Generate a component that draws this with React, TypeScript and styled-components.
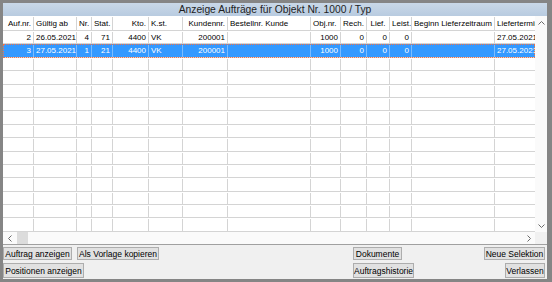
import React, { ReactElement } from "react";
import styled, { createGlobalStyle } from "styled-components";

type Align = "left" | "right" | "center";

interface Column {
    title: string;
    width: number;
    head: Align;
    body: Align;
}

const columns: Column[] = [
    { title: "Auf.nr.", width: 31, head: "right", body: "right" },
    { title: "Gültig ab", width: 43, head: "left", body: "left" },
    { title: "Nr.", width: 15, head: "left", body: "right" },
    { title: "Stat.", width: 21, head: "left", body: "right" },
    { title: "Kto.", width: 36, head: "right", body: "right" },
    { title: "K.st.", width: 34, head: "left", body: "left" },
    { title: "Kundennr.", width: 45, head: "right", body: "right" },
    { title: "Bestellnr. Kunde", width: 83, head: "left", body: "left" },
    { title: "Obj.nr.", width: 30, head: "left", body: "right" },
    { title: "Rech.", width: 26, head: "left", body: "right" },
    { title: "Lief.", width: 23, head: "center", body: "right" },
    { title: "Leist.", width: 22, head: "left", body: "right" },
    { title: "Beginn Lieferzeitraum", width: 83, head: "left", body: "left" },
    { title: "Liefertermin", width: 60, head: "left", body: "left" },
];

const orders: string[][] = [
    ["2", "26.05.2021", "4", "71", "4400", "VK", "200001", "", "1000", "0", "0", "0", "", "27.05.2021"],
    ["3", "27.05.2021", "1", "21", "4400", "VK", "200001", "", "1000", "0", "0", "0", "", "27.05.2021"],
];

const EMPTY_ROWS = 13;

const GlobalStyle = createGlobalStyle`
    body {
        margin: 0;
        background: #ffffff;
        font-family: "Liberation Sans", Arial, sans-serif;
    }
`;

const Frame = styled.div`
    box-sizing: border-box;
    width: 552px;
    height: 282px;
    padding: 3px 5px 3px 3px;
    background-color: #858585;
    display: flex;
    flex-direction: column;
`;

const TitleBar = styled.div`
    height: 13px;
    line-height: 13px;
    background: linear-gradient(#c9d8e8, #b8cbe0);
    color: #1e1e1e;
    font-size: 10.3px;
    text-align: center;
    white-space: nowrap;
`;

const Table = styled.div`
    display: grid;
    grid-template-columns: 532px 12px;
    grid-template-rows: 216px 12px;
    background-color: #ffffff;
`;

const Viewport = styled.div`
    overflow: hidden;
    font-size: 8px;
    color: #000000;
`;

const Line = styled.div<{ $selected?: boolean; $head?: boolean }>`
    display: grid;
    grid-template-columns: ${columns.map((c) => c.width + "px").join(" ")};
    box-sizing: border-box;
    height: ${(p) => (p.$head ? "15px" : "13.4px")};
    line-height: ${(p) => (p.$head ? "14px" : "12px")};
    padding-top: 1px;
    border-bottom: 1px solid #d4d4d4;
    background-color: ${(p) => (p.$selected ? "#3399ff" : "#ffffff")};
    color: ${(p) => (p.$selected ? "#ffffff" : "#000000")};
    outline: ${(p) => (p.$selected ? "1px dotted #f0734a" : "none")};
    outline-offset: -1px;
`;

const Cell = styled.div<{ $align: Align; $selected?: boolean }>`
    box-sizing: border-box;
    padding: 0 2px;
    border-right: 1px solid ${(p) => (p.$selected ? "rgba(255, 255, 255, 0.35)" : "#d4d4d4")};
    text-align: ${(p) => p.$align};
    white-space: nowrap;
    overflow: hidden;
`;

const VScroll = styled.div`
    display: flex;
    flex-direction: column;
    justify-content: space-between;
    background-color: #fafafa;
`;

const HScroll = styled.div`
    display: flex;
    align-items: stretch;
    background-color: #fafafa;
`;

const Arrow = styled.div<{ $size: number }>`
    flex: 0 0 ${(p) => p.$size}px;
    height: ${(p) => p.$size}px;
    display: flex;
    align-items: center;
    justify-content: center;
`;

const Thumb = styled.div`
    flex: 0 0 11px;
    margin: 0 1px;
    background-color: #dcdcdc;
`;

const Track = styled.div`
    flex: 1;
`;

const Corner = styled.div`
    background-color: #f0f0f0;
`;

const Panel = styled.div`
    flex: 1;
    display: flex;
    padding: 2px 2px 1px 0;
    border-top: 1px solid #a0a0a0;
    background-color: #f0f0f0;
`;

const Group = styled.div<{ $end?: boolean; $width?: number }>`
    display: grid;
    grid-template-rows: 13px 15px;
    row-gap: 3px;
    justify-items: ${(p) => (p.$end ? "end" : "start")};
    width: ${(p) => (p.$width ? p.$width + "px" : "auto")};
    margin-left: ${(p) => (p.$end ? "auto" : "0")};
`;

const ButtonRow = styled.div`
    display: flex;
    gap: 5px;
`;

const Button = styled.button<{ $w: number }>`
    box-sizing: border-box;
    width: ${(p) => p.$w}px;
    height: 100%;
    margin: 0;
    padding: 0;
    border: 1px solid #adadad;
    background-color: #e1e1e1;
    color: #000000;
    font-family: "Liberation Sans", Arial, sans-serif;
    font-size: 8.5px;
    white-space: nowrap;
    overflow: visible;
`;

function Chevron(props: { dir: "up" | "down" | "left" | "right" }): ReactElement {
    const points = {
        up: "0.5,3.5 3.5,0.5 6.5,3.5",
        down: "0.5,0.5 3.5,3.5 6.5,0.5",
        left: "3.5,0.5 0.5,3.5 3.5,6.5",
        right: "0.5,0.5 3.5,3.5 0.5,6.5",
    }[props.dir];
    const flat = props.dir === "up" || props.dir === "down";
    return (
        <svg width={flat ? 7 : 4} height={flat ? 4 : 7} viewBox={flat ? "0 0 7 4" : "0 0 4 7"}>
            <polyline points={points} fill="none" stroke="#6b6b6b" strokeWidth="1" />
        </svg>
    );
}

function OrderRow(props: { values: string[]; selected?: boolean }): ReactElement {
    return (
        <Line $selected={props.selected}>
            {columns.map((col, index) => (
                <Cell key={index} $align={col.body} $selected={props.selected}>
                    {props.values[index]}
                </Cell>
            ))}
        </Line>
    );
}

export default function App(): ReactElement {
    return (
        <>
            <GlobalStyle />
            <Frame>
                <TitleBar>Anzeige Aufträge für Objekt Nr. 1000 / Typ</TitleBar>
                <Table>
                    <Viewport>
                        <Line $head>
                            {columns.map((col, index) => (
                                <Cell key={index} $align={col.head}>{col.title}</Cell>
                            ))}
                        </Line>
                        <OrderRow values={orders[0]} />
                        <OrderRow values={orders[1]} selected />
                        {Array.from({ length: EMPTY_ROWS }).map((_, index) => (
                            <OrderRow key={index} values={[]} />
                        ))}
                    </Viewport>
                    <VScroll>
                        <Arrow $size={13}><Chevron dir="up" /></Arrow>
                        <Arrow $size={13}><Chevron dir="down" /></Arrow>
                    </VScroll>
                    <HScroll>
                        <Arrow $size={13}><Chevron dir="left" /></Arrow>
                        <Thumb />
                        <Track />
                        <Arrow $size={13}><Chevron dir="right" /></Arrow>
                    </HScroll>
                    <Corner />
                </Table>
                <Panel>
                    <Group $width={350}>
                        <ButtonRow>
                            <Button $w={69}>Auftrag anzeigen</Button>
                            <Button $w={82}>Als Vorlage kopieren</Button>
                        </ButtonRow>
                        <Button $w={81}>Positionen anzeigen</Button>
                    </Group>
                    <Group>
                        <Button $w={49}>Dokumente</Button>
                        <Button $w={61}>Auftragshistorie</Button>
                    </Group>
                    <Group $end>
                        <Button $w={61}>Neue Selektion</Button>
                        <Button $w={40}>Verlassen</Button>
                    </Group>
                </Panel>
            </Frame>
        </>
    );
}
